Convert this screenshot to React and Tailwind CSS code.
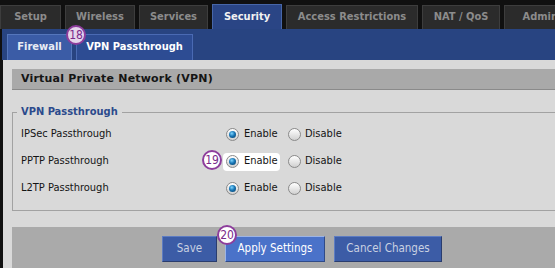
import React from 'react';

const tabs = [
    { label: 'Setup', w: 'w-[61px]' },
    { label: 'Wireless', w: 'w-[70px]' },
    { label: 'Services', w: 'w-[69px]' },
    { label: 'Security', w: 'w-[70px]', active: true },
    { label: 'Access Restrictions', w: 'w-[132px]' },
    { label: 'NAT / QoS', w: 'w-[78px]' },
    { label: 'Administration', w: 'w-[120px]' },
];

const rows = [
    { label: 'IPSec Passthrough' },
    { label: 'PPTP Passthrough', highlight: true },
    { label: 'L2TP Passthrough' },
];

const Radio = ({ checked }) => (
    <span className="w-[13px] h-[13px] rounded-full border border-[#8a8a8a] bg-[linear-gradient(180deg,#ffffff_0%,#d0d0d0_100%)] flex items-center justify-center shrink-0">
        {checked && (
            <span className="w-[7px] h-[7px] rounded-full bg-[radial-gradient(circle_at_40%_35%,#7fd6ff_0%,#1876b6_45%,#04385e_100%)]" />
        )}
    </span>
);

const Badge = ({ n, className }) => (
    <div className={`absolute w-[20px] h-[20px] rounded-full border-2 border-[#8d3d9c] flex items-center justify-center text-[12px] leading-none text-[#7a2a8a] font-['DejaVu_Sans_Condensed','DejaVu_Sans',sans-serif] ${className}`}>
        {n}
    </div>
);

const App = () => {
    return (
        <div className="relative w-[555px] h-[268px] overflow-hidden bg-[#101010] font-['DejaVu_Sans_Condensed','DejaVu_Sans',sans-serif]">
            {/* Main tabs */}
            <div className="flex items-end gap-[4px] pt-[4px] h-[29px] whitespace-nowrap">
                {tabs.map(t => (
                    <div
                        key={t.label}
                        className={
                            t.active
                                ? `${t.w} shrink-0 h-[25px] bg-[#2a4585] border border-b-0 border-[#4766a8] text-[#f2f2f2] text-[11px] font-bold flex items-center justify-center`
                                : `${t.w} shrink-0 h-[24px] bg-[#2b2b2b] border border-b-0 border-[#3d3d3d] text-[#8c8c8c] text-[11px] font-bold flex items-center justify-center`
                        }
                    >
                        {t.label}
                    </div>
                ))}
            </div>

            {/* Sub tabs */}
            <div className="ml-[2px] h-[31px] bg-[#284481] flex items-end gap-[4px] pl-[5px]">
                <div className="w-[65px] h-[26px] bg-[#3b5ca6] border border-b-0 border-[#5576bb] text-[#e8ecf4] text-[11px] font-bold flex items-center justify-center">
                    Firewall
                </div>
                <div className="w-[117px] h-[26px] bg-[#2d4c93] border border-b-0 border-[#4a6ab3] text-white text-[11px] font-bold flex items-center justify-center">
                    VPN Passthrough
                </div>
            </div>

            {/* Content */}
            <div className="ml-[3px] bg-[#d9d9d9] h-[208px] pt-[9px] flex flex-col">
                <div className="ml-[9px] h-[21px] bg-[#a9a9a9] border-b border-[#8a8a8a] flex items-center pl-[9px] text-[11px] font-bold tracking-[0.2px] text-[#151515] font-['DejaVu_Sans',sans-serif]">
                    Virtual Private Network (VPN)
                </div>

                <fieldset className="ml-[9px] mt-[14px] w-[600px] border border-[#a2a2a2] pl-[4px] h-[107px]">
                    <legend className="px-[4px] text-[11px] font-bold text-[#2b4a8c]">VPN Passthrough</legend>
                    <div className="flex flex-col pt-[4px] gap-[7px]">
                        {rows.map(r => (
                            <div key={r.label} className="flex items-center h-[20px] text-[11px] text-[#141414]">
                                <div className="w-[206px] pl-[4px]">{r.label}</div>
                                <div className={`w-[57px] h-[18px] flex items-center gap-[5px] pl-[3px] rounded-[4px] ${r.highlight ? 'bg-white' : ''}`}>
                                    <Radio checked />
                                    <span>Enable</span>
                                </div>
                                <div className="ml-[8px] flex items-center gap-[4px]">
                                    <Radio />
                                    <span>Disable</span>
                                </div>
                            </div>
                        ))}
                    </div>
                </fieldset>

                <div className="ml-[9px] mt-[16px] flex-1 bg-[#aaaaaa] flex items-start gap-[8px] pl-[150px] pt-[9px] text-[11.5px]">
                    <button className="w-[55px] h-[26px] bg-[#3c5ca6] border border-t-[#5d7cc2] border-l-[#5d7cc2] border-b-[#2a3d6e] border-r-[#2a3d6e] text-[#c9d1e2]">
                        Save
                    </button>
                    <button className="w-[100px] h-[26px] bg-[#4a72c9] border border-t-[#9cb4e6] border-l-[#9cb4e6] border-b-[#2f4a88] border-r-[#2f4a88] text-white">
                        Apply Settings
                    </button>
                    <button className="ml-[1px] w-[108px] h-[26px] bg-[#3c5ca6] border border-t-[#5d7cc2] border-l-[#5d7cc2] border-b-[#2a3d6e] border-r-[#2a3d6e] text-[#c9d1e2]">
                        Cancel Changes
                    </button>
                </div>
            </div>

            <Badge n="18" className="left-[66px] top-[25px] bg-[#e6d6ec]" />
            <Badge n="19" className="left-[202px] top-[150px] bg-white" />
            <Badge n="20" className="left-[217px] top-[225px] bg-white" />
        </div>
    );
};

export default App;
